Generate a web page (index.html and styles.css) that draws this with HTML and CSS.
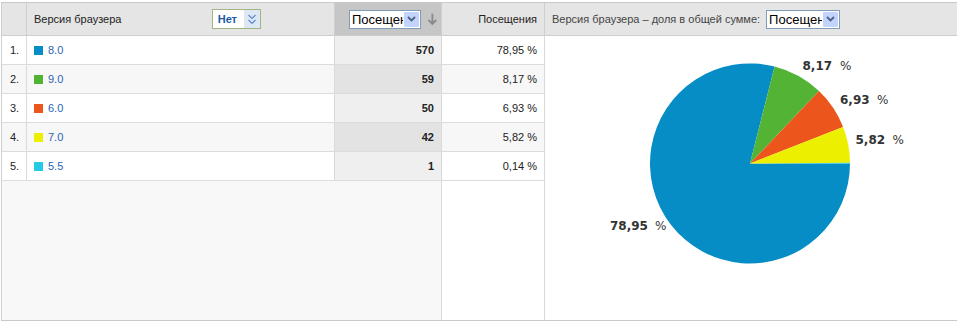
FILE: index.html
```html
<!doctype html>
<html>
    <head>
        <meta charset="utf-8" />
        <title>Версия браузера</title>
        <link rel="stylesheet" href="styles.css">
    </head>
    <body>
        <div class="report">
            <div class="table">
                <div class="row head">
                    <div class="cell num"></div>
                    <div class="cell name">
                        <span>Версия браузера</span>
                        <span class="toggle">
                            <b>Нет</b>
                            <span class="toggle-arrow">
                                <svg width="10" height="12" viewBox="0 0 10 12"><polyline points="1.5,2 5,5.5 8.5,2" /><polyline points="1.5,7 5,10.5 8.5,7" /></svg>
                            </span>
                        </span>
                    </div>
                    <div class="cell visits">
                        <span class="fake-select">
                            <span class="fake-select-text">Посещения</span>
                            <span class="fake-select-btn">
                                <svg width="9" height="6" viewBox="0 0 9 6"><polyline points="1,1 4.5,4.5 8,1" /></svg>
                            </span>
                        </span>
                        <svg class="sort-arrow" width="11" height="13" viewBox="0 0 11 13"><line x1="5.5" y1="0.5" x2="5.5" y2="11" /><polyline points="1.5,7 5.5,11 9.5,7" /></svg>
                    </div>
                    <div class="cell pct">Посещения</div>
                </div>

                <div class="row">
                    <div class="cell num">1.</div>
                    <div class="cell name"><i class="swatch c-blue"></i><a href="#">8.0</a></div>
                    <div class="cell visits">570</div>
                    <div class="cell pct">78,95 %</div>
                </div>
                <div class="row even">
                    <div class="cell num">2.</div>
                    <div class="cell name"><i class="swatch c-green"></i><a href="#">9.0</a></div>
                    <div class="cell visits">59</div>
                    <div class="cell pct">8,17 %</div>
                </div>
                <div class="row">
                    <div class="cell num">3.</div>
                    <div class="cell name"><i class="swatch c-orange"></i><a href="#">6.0</a></div>
                    <div class="cell visits">50</div>
                    <div class="cell pct">6,93 %</div>
                </div>
                <div class="row even">
                    <div class="cell num">4.</div>
                    <div class="cell name"><i class="swatch c-yellow"></i><a href="#">7.0</a></div>
                    <div class="cell visits">42</div>
                    <div class="cell pct">5,82 %</div>
                </div>
                <div class="row">
                    <div class="cell num">5.</div>
                    <div class="cell name"><i class="swatch c-cyan"></i><a href="#">5.5</a></div>
                    <div class="cell visits">1</div>
                    <div class="cell pct">0,14 %</div>
                </div>

                <div class="filler">
                    <div class="filler-left"></div>
                    <div class="filler-right"></div>
                </div>
            </div>

            <div class="chart">
                <div class="chart-head">
                    <span>Версия браузера – доля в общей сумме:</span>
                    <span class="fake-select">
                        <span class="fake-select-text">Посещения</span>
                        <span class="fake-select-btn">
                            <svg width="9" height="6" viewBox="0 0 9 6"><polyline points="1,1 4.5,4.5 8,1" /></svg>
                        </span>
                    </span>
                </div>
                <div class="chart-body">
                    <svg class="pie" width="412" height="284" viewBox="0 0 412 284">
                        <path fill="#078dc6" d="M205,127.5 L305,127.5 A100,100 0 1,1 229.57,30.56 Z" />
                        <path fill="#53b334" d="M205,127.5 L229.57,30.56 A100,100 0 0,1 274,55.12 Z" />
                        <path fill="#ec561c" d="M205,127.5 L274,55.12 A100,100 0 0,1 298.09,90.98 Z" />
                        <path fill="#ecef00" d="M205,127.5 L298.09,90.98 A100,100 0 0,1 305,126.68 Z" />
                        <path fill="#24cbe5" d="M205,127.5 L305,126.68 A100,100 0 0,1 305,127.5 Z" />
                        <text class="lbl" x="257.5" y="34"><tspan class="lbl-num">8,17</tspan><tspan x="295">%</tspan></text>
                        <text class="lbl" x="295" y="68"><tspan class="lbl-num">6,93</tspan><tspan x="332">%</tspan></text>
                        <text class="lbl" x="310.5" y="108"><tspan class="lbl-num">5,82</tspan><tspan x="347.5">%</tspan></text>
                        <text class="lbl" x="65" y="194"><tspan class="lbl-num">78,95</tspan><tspan x="110">%</tspan></text>
                    </svg>
                </div>
            </div>
        </div>
    </body>
</html>
```

FILE: styles.css
```css
body {
    margin: 0;
    background: #fff;
    font-family: "Liberation Sans", Arial, sans-serif;
    font-size: 11px;
    color: #222;
}
.report {
    display: flex;
    height: 319px;
    margin: 2px 0 0 1px;
    border-top: 1px solid #c9c9c9;
    border-bottom: 1px solid #c9c9c9;
    border-left: 1px solid #cfcfcf;
    box-sizing: border-box;
}
.table {
    display: flex;
    flex-direction: column;
    width: 543px;
}
.row {
    display: grid;
    grid-template-columns: 25px 308px 107px 103px;
    height: 29px;
}
.cell {
    display: flex;
    align-items: center;
    box-sizing: border-box;
    border-right: 1px solid #dadada;
    border-bottom: 1px solid #dcdcdc;
    background: #fff;
}
.row.even .cell {
    background: #f7f7f7;
}
.num {
    padding-left: 8px;
}
.name {
    padding-left: 7px;
}
.name a {
    color: #2b63b2;
    text-decoration: none;
}
.swatch {
    display: inline-block;
    width: 9px;
    height: 9px;
    margin-right: 5px;
}
.c-blue { background: #058dc7; }
.c-green { background: #50b432; }
.c-orange { background: #ed561b; }
.c-yellow { background: #edef00; }
.c-cyan { background: #24cbe5; }
.visits {
    justify-content: flex-end;
    padding-right: 7px;
    font-weight: bold;
    background: #efefef;
}
.row .cell.visits {
    background: #efefef;
}
.row.even .cell.visits {
    background: #e3e3e3;
}
.pct {
    justify-content: flex-end;
    padding-right: 7px;
}

/* header row */
.row.head {
    height: 33px;
}
.row.head .cell {
    background: #e5e5e5;
    border-bottom-color: #cdcdcd;
    border-right-color: #cfcfcf;
}
.row.head .cell.visits {
    background: #c6c6c6;
    font-weight: normal;
    padding-right: 3px;
    justify-content: flex-start;
    padding-left: 14px;
}
.row.head .name {
    justify-content: space-between;
    padding-right: 73px;
}
.toggle {
    display: flex;
    align-items: stretch;
    height: 20px;
    box-sizing: border-box;
    border: 1px solid #a2b584;
    background: #fff;
}
.toggle b {
    color: #1d58a8;
    padding: 0 7px 0 5px;
    line-height: 18px;
}
.toggle-arrow {
    display: flex;
    align-items: center;
    justify-content: center;
    width: 16px;
    background: #dde8f4;
}
.toggle-arrow polyline {
    fill: none;
    stroke: #5c8ccf;
    stroke-width: 1.2;
}
.fake-select {
    display: flex;
    width: 74px;
    height: 19px;
    box-sizing: border-box;
    border: 1px solid #7f9db9;
    background: #fff;
    font-size: 13px;
    color: #000;
    overflow: hidden;
}
.fake-select-text {
    flex: 1;
    overflow: hidden;
    white-space: nowrap;
    padding-left: 2px;
    line-height: 17px;
}
.fake-select-btn {
    display: flex;
    align-items: center;
    justify-content: center;
    width: 15px;
    margin: 1px;
    background: #c3d4fc;
    border-radius: 1px;
}
.fake-select-btn polyline {
    fill: none;
    stroke: #4d6185;
    stroke-width: 1.8;
}
.sort-arrow {
    margin-left: 6px;
}
.sort-arrow line,
.sort-arrow polyline {
    fill: none;
    stroke: #8a8a8a;
    stroke-width: 2;
}

/* empty area below rows */
.filler {
    flex: 1;
    display: grid;
    grid-template-columns: 440px 103px;
}
.filler-left {
    background: #f8f8f8;
    border-right: 1px solid #dadada;
}
.filler-right {
    background: #fff;
    border-right: 1px solid #dadada;
}

/* chart panel */
.chart {
    flex: 1;
    display: flex;
    flex-direction: column;
}
.chart-head {
    display: flex;
    align-items: center;
    gap: 6px;
    height: 33px;
    box-sizing: border-box;
    padding-left: 7px;
    background: #e5e5e5;
    border-bottom: 1px solid #cdcdcd;
    color: #444;
}
.chart-body {
    flex: 1;
}
.pie {
    display: block;
}
.lbl {
    font-family: "DejaVu Sans", sans-serif;
    font-size: 12px;
    fill: #333;
}
.lbl-num {
    font-weight: bold;
}
```
